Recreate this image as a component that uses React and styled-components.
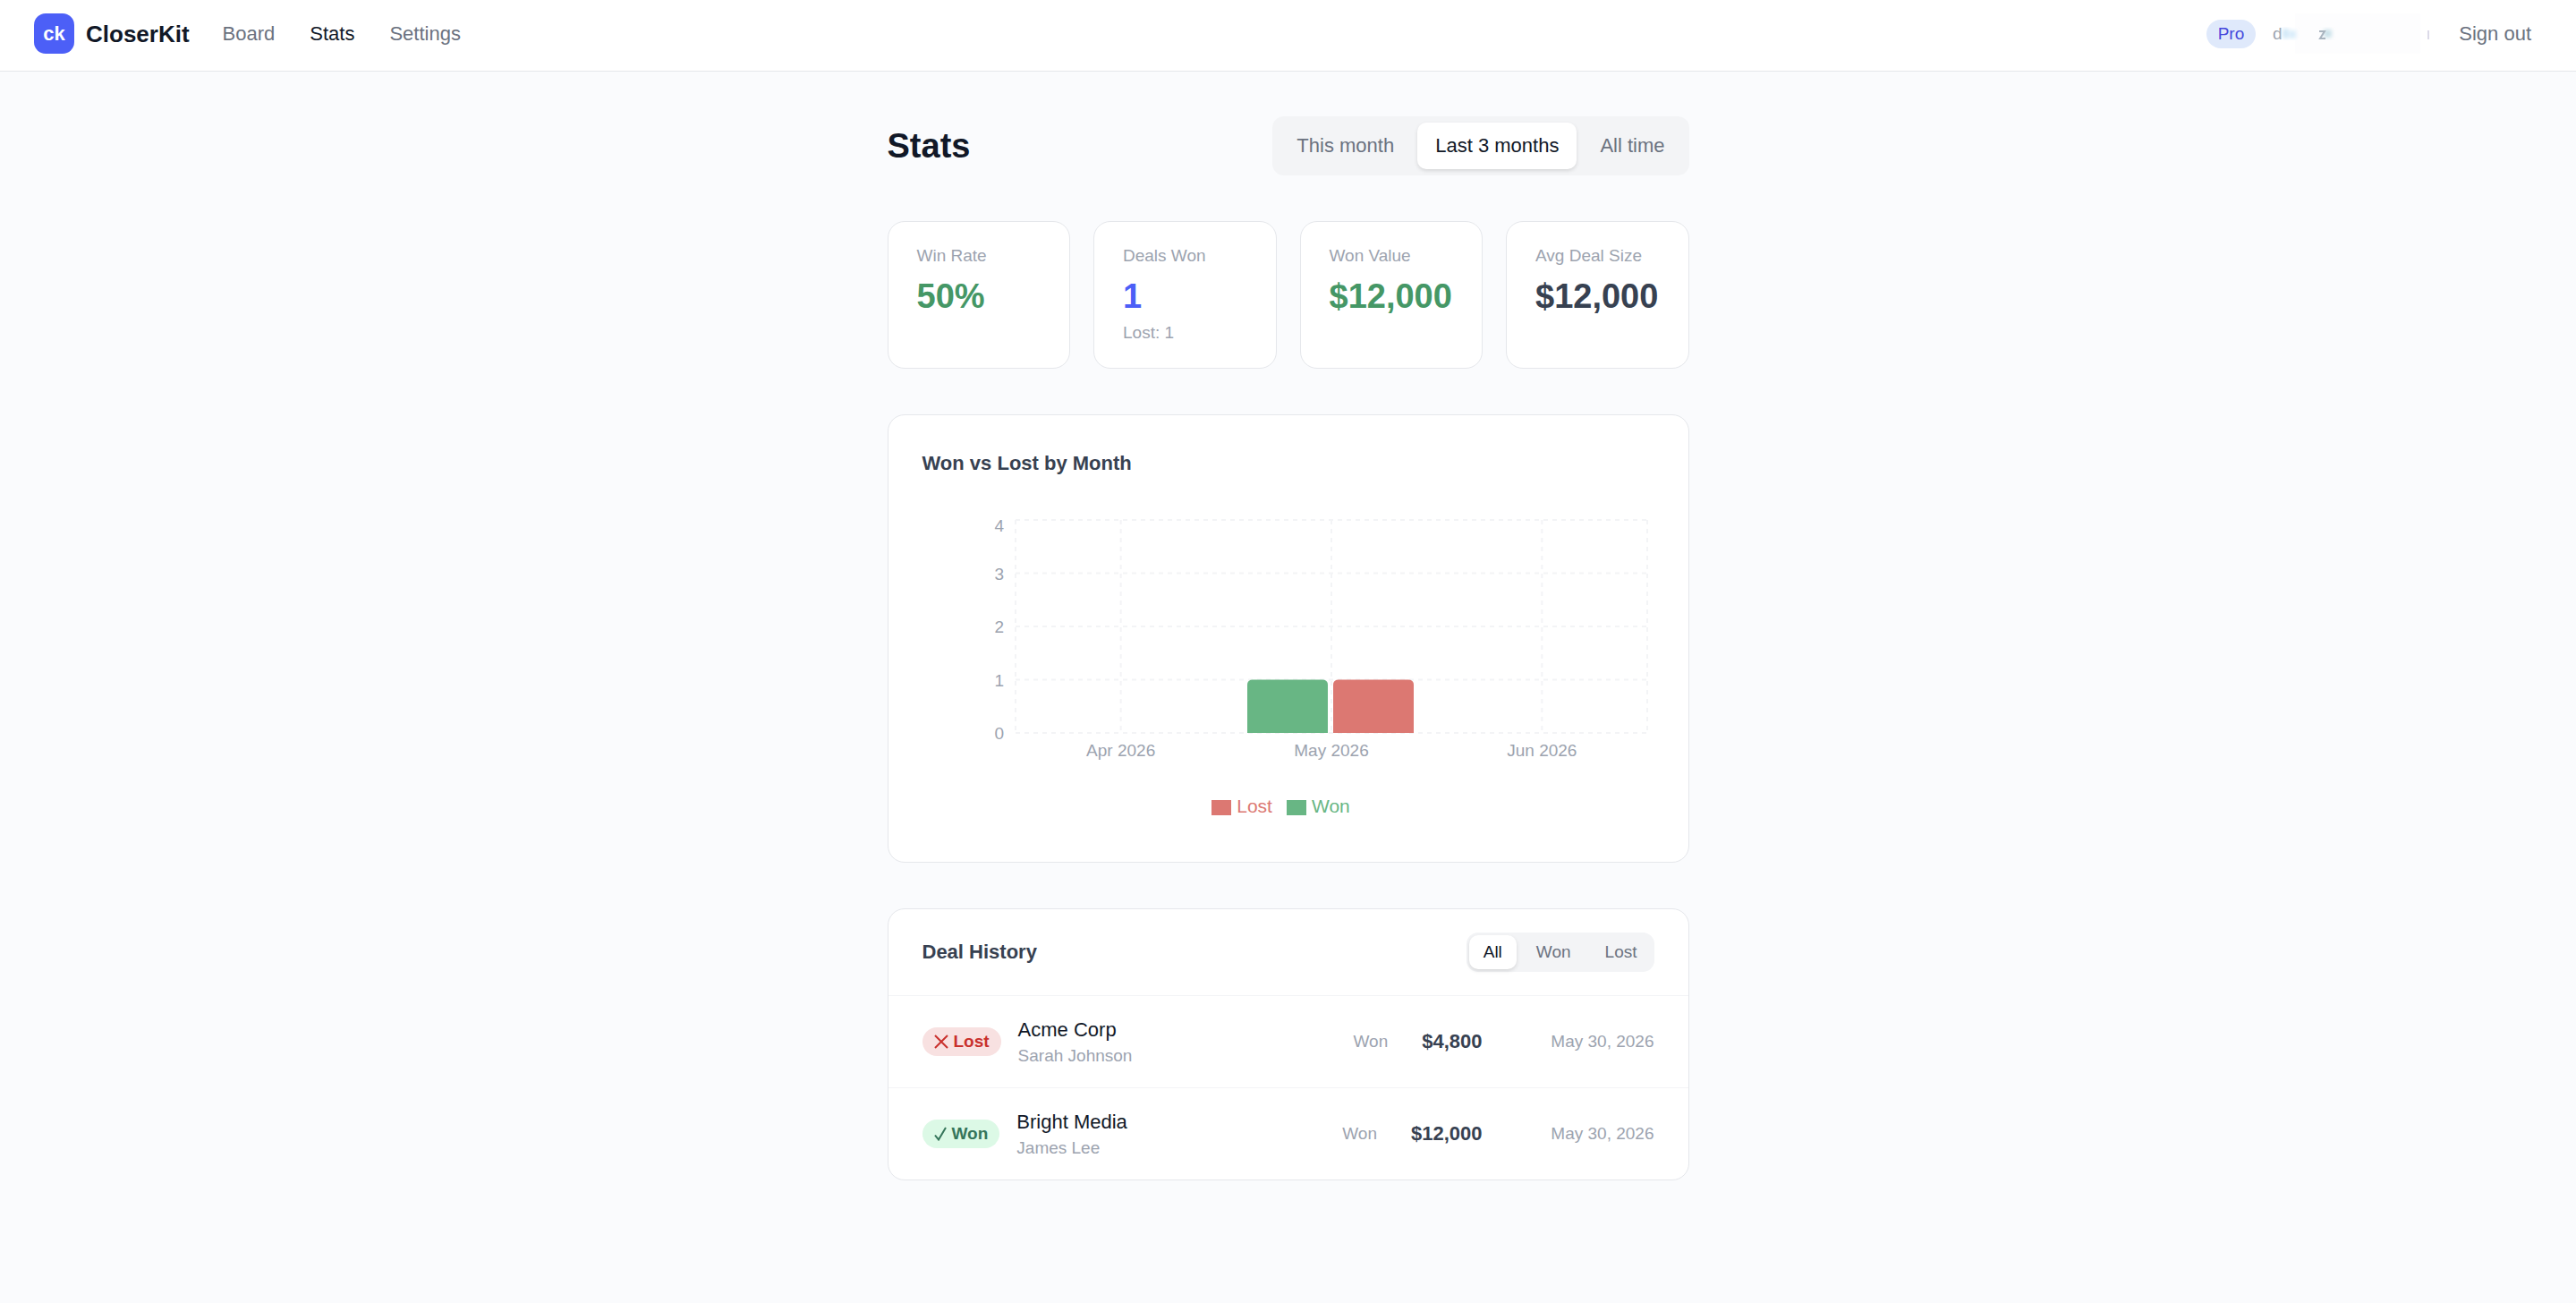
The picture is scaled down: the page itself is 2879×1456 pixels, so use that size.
import React, { useState } from 'react';
import styled, { createGlobalStyle, ThemeProvider } from 'styled-components';

const theme = {
	ink: '#111827',
	dark: '#374151',
	gray: '#6b7280',
	muted: '#9ca3af',
	line: '#e5e7eb',
	softLine: '#f3f4f6',
	brand: '#4c5ff7',
	green: '#459766',
	barGreen: '#68b684',
	barRed: '#dc7872',
};

const GlobalStyle = createGlobalStyle`
	* {
		box-sizing: border-box;
	}
	body {
		margin: 0;
		min-height: 100vh;
		background: #fafbfd;
		color: #111827;
		font-family: 'Liberation Sans', Arial, sans-serif;
		font-size: 22px;
		line-height: 32px;
	}
	h1, h2, p, ul, dl, dd {
		margin: 0;
		padding: 0;
	}
	button {
		border: 0;
		background: none;
		padding: 0;
		font: inherit;
		cursor: pointer;
	}
`;

const Header = styled.header`
	display: flex;
	align-items: center;
	justify-content: space-between;
	padding: 15px 50px 19px 38px;
	background: #fff;
	border-bottom: 1px solid ${(props) => props.theme.line};
`;

const HeaderSide = styled.div`
	display: flex;
	align-items: center;
`;

const Brand = styled.a`
	display: flex;
	align-items: center;
	gap: 13px;
	margin-right: 37px;
	color: ${(props) => props.theme.ink};
	font-size: 26px;
	font-weight: 700;
	text-decoration: none;
`;

const Logo = styled.span`
	display: flex;
	align-items: center;
	justify-content: center;
	width: 45px;
	height: 45px;
	border-radius: 13px;
	background: ${(props) => props.theme.brand};
	color: #fff;
	font-size: 22px;
`;

const Nav = styled.nav`
	display: flex;
	gap: 39px;
`;

const NavLink = styled.a`
	color: ${(props) => (props.$active ? props.theme.ink : props.theme.gray)};
	text-decoration: none;
`;

const Plan = styled.span`
	padding: 3px 13px;
	border-radius: 16px;
	background: #dfe9fb;
	color: #4648dc;
	font-size: 19px;
	line-height: 26px;
`;

const Account = styled.svg`
	display: block;
	width: 190px;
	height: 45px;
	margin: 0 23px 0 14px;
	font-size: 19px;
`;

const SignOut = styled.button`
	color: ${(props) => props.theme.gray};
`;

const Main = styled.main`
	display: flex;
	flex-direction: column;
	gap: 51px;
	max-width: 896px;
	margin: 0 auto;
	padding: 50px 0;
`;

const TitleRow = styled.div`
	display: flex;
	align-items: center;
	justify-content: space-between;
`;

const Title = styled.h1`
	font-size: 38px;
	line-height: 51px;
`;

const Periods = styled.div`
	display: flex;
	gap: 6px;
	padding: 7px;
	border-radius: 13px;
	background: ${(props) => props.theme.softLine};
`;

const Period = styled.button`
	padding: 10px 20px;
	border-radius: 10px;
	color: ${(props) => (props.$active ? props.theme.ink : props.theme.gray)};
	background: ${(props) => (props.$active ? '#fff' : 'transparent')};
	box-shadow: ${(props) => (props.$active ? '0 2px 4px rgba(0, 0, 0, 0.12)' : 'none')};
`;

const Filters = styled(Periods)`
	padding: 3px;
`;

const Filter = styled(Period)`
	padding: 6px 16px;
	font-size: 19px;
	line-height: 26px;
`;

const Card = styled.section`
	border: 1px solid ${(props) => props.theme.line};
	border-radius: 19px;
	background: #fff;
`;

const Tiles = styled.dl`
	display: grid;
	grid-template-columns: repeat(4, 1fr);
	gap: 26px;
`;

const Tile = styled(Card).attrs({ as: 'div' })`
	padding: 25px 32px 26px;
`;

const TileLabel = styled.dt`
	margin-bottom: 7px;
	color: ${(props) => props.theme.muted};
	font-size: 19px;
	line-height: 26px;
`;

const TileValue = styled.dd`
	color: ${(props) => props.theme[props.$tone]};
	font-size: 38px;
	font-weight: 700;
	line-height: 51px;
`;

const TileNote = styled.dd`
	margin-top: 2px;
	color: ${(props) => props.theme.muted};
	font-size: 19px;
	line-height: 26px;
`;

const ChartCard = styled(Card)`
	padding: 38px;
`;

const CardTitle = styled.h2`
	color: ${(props) => props.theme.dark};
	font-size: 22px;
	line-height: 32px;
`;

const Plot = styled.svg`
	display: block;
	width: 100%;
	margin-top: 28px;
	overflow: visible;
	font-size: 19px;
`;

const Legend = styled.ul`
	display: flex;
	justify-content: center;
	gap: 16px;
	padding: 29px 16px 8px 0;
	list-style: none;
	font-size: 21px;
`;

const LegendItem = styled.li`
	display: flex;
	align-items: center;
	gap: 6px;
	color: ${(props) => props.$color};
`;

const Swatch = styled.span`
	width: 22px;
	height: 17px;
	margin-top: 2px;
	background: ${(props) => props.$color};
`;

const HistoryHead = styled.div`
	display: flex;
	align-items: center;
	justify-content: space-between;
	padding: 26px 38px;
`;

const Deals = styled.ul`
	list-style: none;
`;

const Deal = styled.li`
	display: flex;
	align-items: center;
	padding: 22px 38px;
	border-top: 1px solid ${(props) => props.theme.softLine};
`;

const Badge = styled.span`
	display: flex;
	align-items: center;
	gap: 6px;
	margin-right: 19px;
	padding: 3px 13px;
	border-radius: 16px;
	background: ${(props) => (props.$won ? '#dcf9e6' : '#f8e1e1')};
	color: ${(props) => (props.$won ? '#35755a' : '#c9302c')};
	font-size: 19px;
	font-weight: 700;
	line-height: 26px;
`;

const Company = styled.p`
	line-height: 32px;
`;

const Small = styled.p`
	color: ${(props) => props.theme.muted};
	font-size: 19px;
	line-height: 26px;
`;

const Who = styled.div`
	flex: 1;
`;

const Amount = styled.p`
	margin-left: 38px;
	color: ${(props) => props.theme.dark};
	font-weight: 700;
`;

const DealDate = styled(Small)`
	width: 192px;
	text-align: right;
`;

const tiles = [
	{ label: 'Win Rate', value: '50%', tone: 'green' },
	{ label: 'Deals Won', value: '1', tone: 'brand', note: 'Lost: 1' },
	{ label: 'Won Value', value: '$12,000', tone: 'green' },
	{ label: 'Avg Deal Size', value: '$12,000', tone: 'dark' },
];

const months = [
	{ name: 'Apr 2026', won: 0, lost: 0 },
	{ name: 'May 2026', won: 1, lost: 1 },
	{ name: 'Jun 2026', won: 0, lost: 0 },
];

const deals = [
	{ company: 'Acme Corp', contact: 'Sarah Johnson', result: 'Lost', amount: '$4,800', date: 'May 30, 2026' },
	{ company: 'Bright Media', contact: 'James Lee', result: 'Won', amount: '$12,000', date: 'May 30, 2026' },
];

const LEFT = 104;
const RIGHT = 810;
const TOP = 19;
const BOTTOM = 257;
const STEP = (BOTTOM - TOP) / 4;
const BAND = (RIGHT - LEFT) / 3;

const Bar = ({ x, value, color }) => {
	const y = BOTTOM - value * STEP;
	return <path d={`M${x} ${BOTTOM}V${y + 6}q0-6 6-6h78q6 0 6 6V${BOTTOM}z`} fill={color} />;
};

const Chart = () => (
	<Plot viewBox="0 0 818 294" role="img" aria-label="Won vs Lost by Month">
		<g stroke="#f3f4f6" strokeWidth="2" strokeDasharray="5 5">
			{[0, 1, 2, 3, 4].map((n) => (
				<line key={n} x1={LEFT} x2={RIGHT} y1={BOTTOM - n * STEP} y2={BOTTOM - n * STEP} />
			))}
			{[0, 0.5, 1.5, 2.5, 3].map((n) => (
				<line key={n} x1={LEFT + n * BAND} x2={LEFT + n * BAND} y1={TOP} y2={BOTTOM} />
			))}
		</g>
		<g fill={theme.muted}>
			{[0, 1, 2, 3, 4].map((n) => (
				<text key={n} x={LEFT - 13} y={n === 4 ? TOP + 13 : BOTTOM - n * STEP + 7} textAnchor="end">
					{n}
				</text>
			))}
			{months.map((month, i) => (
				<text key={month.name} x={LEFT + (i + 0.5) * BAND} y={BOTTOM + 26} textAnchor="middle">
					{month.name}
				</text>
			))}
		</g>
		{months.map((month, i) => {
			const center = LEFT + (i + 0.5) * BAND;
			return (
				<g key={month.name}>
					{month.won > 0 && <Bar x={center - 94} value={month.won} color={theme.barGreen} />}
					{month.lost > 0 && <Bar x={center + 2} value={month.lost} color={theme.barRed} />}
				</g>
			);
		})}
	</Plot>
);

const Mark = ({ won }) => (
	<svg
		width={won ? 14 : 16}
		height="16"
		viewBox={won ? '0 0 14 16' : '0 0 16 16'}
		fill="none"
		stroke="currentColor"
		strokeWidth="2"
		aria-hidden="true"
	>
		{won ? <path d="M1 9.5l4 5L13 1" /> : <path d="M1 1l14 14M15 1L1 15" />}
	</svg>
);

export default () => {
	const [period, setPeriod] = useState('Last 3 months');
	const [filter, setFilter] = useState('All');
	const shown = deals.filter((deal) => filter === 'All' || deal.result === filter);

	return (
		<ThemeProvider theme={theme}>
			<GlobalStyle />
			<Header>
				<HeaderSide>
					<Brand href="#">
						<Logo>ck</Logo>
						CloserKit
					</Brand>
					<Nav>
						<NavLink href="#board">Board</NavLink>
						<NavLink href="#stats" $active>
							Stats
						</NavLink>
						<NavLink href="#settings">Settings</NavLink>
					</Nav>
				</HeaderSide>
				<HeaderSide>
					<Plan>Pro</Plan>
					<Account viewBox="0 0 190 45" aria-hidden="true">
						<defs>
							<filter id="smudge">
								<feGaussianBlur stdDeviation="2" />
							</filter>
						</defs>
						<rect x="30" y="0" width="140" height="45" fill="#fdfdfe" />
						<text x="5" y="29" fill={theme.muted}>
							d
						</text>
						<g filter="url(#smudge)">
							<rect x="16" y="17" width="7" height="11" fill="#d3e9f8" />
							<rect x="24" y="19" width="7" height="9" fill="#d8ecfa" />
							<rect x="62" y="18" width="9" height="9" fill="#cbe2ea" />
						</g>
						<path d="M57 20h6l-5 8h6" stroke="#a9b4bf" strokeWidth="2" fill="none" />
						<rect x="178" y="19" width="2" height="10" fill="#dcdae8" />
					</Account>
					<SignOut type="button">Sign out</SignOut>
				</HeaderSide>
			</Header>
			<Main>
				<TitleRow>
					<Title>Stats</Title>
					<Periods>
						{['This month', 'Last 3 months', 'All time'].map((name) => (
							<Period key={name} type="button" $active={name === period} onClick={() => setPeriod(name)}>
								{name}
							</Period>
						))}
					</Periods>
				</TitleRow>
				<Tiles>
					{tiles.map((tile) => (
						<Tile key={tile.label}>
							<TileLabel>{tile.label}</TileLabel>
							<TileValue $tone={tile.tone}>{tile.value}</TileValue>
							{tile.note && <TileNote>{tile.note}</TileNote>}
						</Tile>
					))}
				</Tiles>
				<ChartCard>
					<CardTitle>Won vs Lost by Month</CardTitle>
					<Chart />
					<Legend>
						<LegendItem $color={theme.barRed}>
							<Swatch $color={theme.barRed} />
							Lost
						</LegendItem>
						<LegendItem $color={theme.barGreen}>
							<Swatch $color={theme.barGreen} />
							Won
						</LegendItem>
					</Legend>
				</ChartCard>
				<Card>
					<HistoryHead>
						<CardTitle>Deal History</CardTitle>
						<Filters>
							{['All', 'Won', 'Lost'].map((name) => (
								<Filter key={name} type="button" $active={name === filter} onClick={() => setFilter(name)}>
									{name}
								</Filter>
							))}
						</Filters>
					</HistoryHead>
					<Deals>
						{shown.map((deal) => (
							<Deal key={deal.company}>
								<Badge $won={deal.result === 'Won'}>
									<Mark won={deal.result === 'Won'} />
									{deal.result}
								</Badge>
								<Who>
									<Company>{deal.company}</Company>
									<Small>{deal.contact}</Small>
								</Who>
								<Small>Won</Small>
								<Amount>{deal.amount}</Amount>
								<DealDate>{deal.date}</DealDate>
							</Deal>
						))}
					</Deals>
				</Card>
			</Main>
		</ThemeProvider>
	);
};
